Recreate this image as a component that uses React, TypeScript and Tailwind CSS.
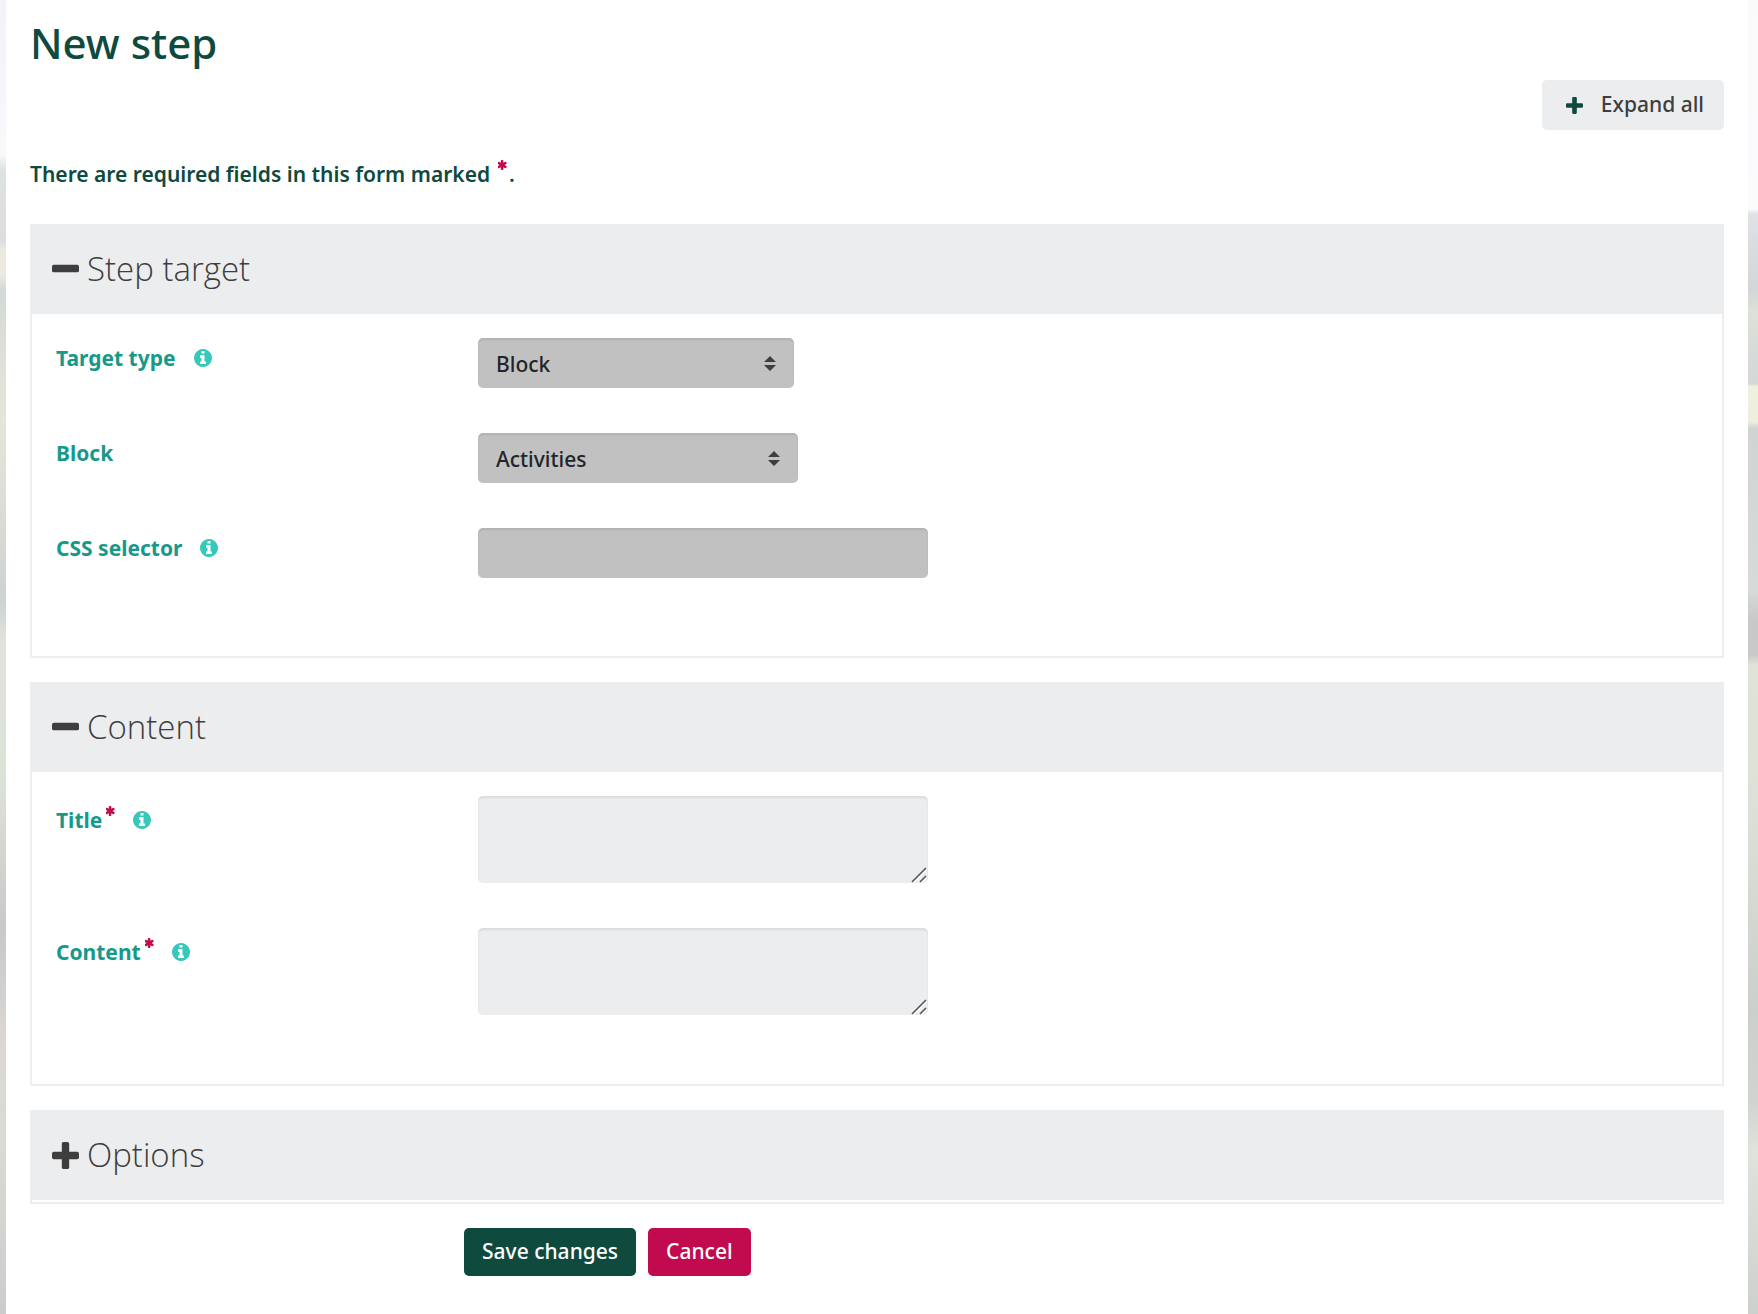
import { useState } from 'react'
import type { ReactNode } from 'react'
import clsx from 'clsx'

const leftScenery =
  'bg-[linear-gradient(to_bottom,#f2f3f9_0px,#f8f9fb_155px,#dfe2e2_170px,#dbdedc_240px,#eceadf_250px,#eceadf_275px,#d5d9d5_290px,#e3e7d9_420px,#d9dcd4_520px,#ced2d2_600px,#dfe3da_640px,#dde2d7_780px,#c8c9c9_930px,#dcd8d4_1050px,#d8dbd4_1150px,#cacdcb_1314px)]'
const rightScenery =
  'bg-[linear-gradient(to_bottom,#fafafb_0px,#fbfbfd_209px,#dfe2e6_214px,#d2d6d8_290px,#dde1d8_310px,#d3d7d7_384px,#eff0de_386px,#eeefdc_422px,#d0d4d3_428px,#d6dad9_590px,#c8c8c9_620px,#c9c9c8_655px,#e0e4d7_665px,#dce0d6_810px,#ccd0cc_1010px,#d0d3cf_1100px,#e0e3dc_1150px,#cdd1cd_1314px)]'

function PlusIcon({ className }: { className?: string }) {
  return (
    <svg viewBox="0 0 1408 1408" className={className} fill="currentColor" aria-hidden="true">
      <rect x="0" y="512" width="1408" height="384" rx="96" />
      <rect x="512" y="0" width="384" height="1408" rx="96" />
    </svg>
  )
}

function MinusIcon({ className }: { className?: string }) {
  return (
    <svg viewBox="0 0 1408 1408" className={className} fill="currentColor" aria-hidden="true">
      <rect x="0" y="450" width="1408" height="400" rx="96" />
    </svg>
  )
}

function InfoIcon() {
  return (
    <svg viewBox="128 128 1536 1536" className="size-[18px]" fill="currentColor" aria-hidden="true">
      <path d="M1152 1376v-160q0-14-9-23t-23-9h-96v-512q0-14-9-23t-23-9h-320q-14 0-23 9t-9 23v160q0 14 9 23t23 9h96v320h-96q-14 0-23 9t-9 23v160q0 14 9 23t23 9h448q14 0 23-9t9-23zm-128-896v-160q0-14-9-23t-23-9h-192q-14 0-23 9t-9 23v160q0 14 9 23t23 9h192q14 0 23-9t9-23zm640 416q0 209-103 385.5t-279.5 279.5-385.5 103-385.5-103-279.5-279.5-103-385.5 103-385.5 279.5-279.5 385.5-103 385.5 103 279.5 279.5 103 385.5z" />
    </svg>
  )
}

function Required({ className }: { className?: string }) {
  return (
    <svg
      viewBox="212 128 1368 1536"
      className={clsx('h-[10px] w-[9px] text-[#c20b4f]', className)}
      fill="currentColor"
      role="img"
      aria-label="Required"
    >
      <path d="M1482 1050q46 26 59.5 77.5t-12.5 97.5l-64 110q-26 46-77.5 59.5t-97.5-12.5l-266-153v307q0 52-38 90t-90 38h-128q-52 0-90-38t-38-90v-307l-266 153q-46 26-97.5 12.5t-77.5-59.5l-64-110q-26-46-12.5-97.5t59.5-77.5l266-154-266-154q-46-26-59.5-77.5t12.5-97.5l64-110q26-46 77.5-59.5t97.5 12.5l266 153v-307q0-52 38-90t90-38h128q52 0 90 38t38 90v307l266-153q46-26 97.5-12.5t77.5 59.5l64 110q26 46 12.5 97.5t-59.5 77.5l-266 154z" />
    </svg>
  )
}

interface SectionProps {
  title: string
  open: boolean
  onToggle: () => void
  children?: ReactNode
}

function Section({ title, open, onToggle, children }: SectionProps) {
  const Icon = open ? MinusIcon : PlusIcon
  return (
    <section className="mb-6 border-2 border-t-0 border-[#eeeeef]">
      <h2 className="-mx-0.5 bg-[#ecedef]">
        <button
          type="button"
          aria-expanded={open}
          onClick={onToggle}
          className="flex h-[90px] w-full items-center gap-2 px-[22px] text-left font-['Open_Sans',sans-serif] text-[33px] font-light text-[#3e3e3e]"
        >
          <Icon className="size-[27px]" />
          {title}
        </button>
      </h2>
      {open ? children : <div className="h-0.5" />}
    </section>
  )
}

interface FieldProps {
  id: string
  label: string
  required?: boolean
  help?: boolean
  children: ReactNode
}

function Field({ id, label, required, help, children }: FieldProps) {
  return (
    <div className="grid grid-cols-[422px_1fr] items-start">
      <div className={clsx('flex items-center gap-[18px] text-[#17998a]', required ? 'pt-2.5' : 'pt-1.5')}>
        <label htmlFor={id} className="flex text-[21px] leading-7 font-bold">
          {label}
          {required && <Required className="ml-1" />}
        </label>
        {help && (
          <button type="button" aria-label={`Help with ${label}`} className="text-[#36c9bb]">
            <InfoIcon />
          </button>
        )}
      </div>
      <div>{children}</div>
    </div>
  )
}

const control = 'rounded-[5px] shadow-[inset_0_2px_2px_rgba(0,0,0,0.08)] text-[21px] font-medium text-[#212529]'

function Select({ id, options, className }: { id: string; options: string[]; className: string }) {
  return (
    <div className={clsx('relative', className)}>
      <select id={id} className={clsx(control, 'h-[50px] w-full appearance-none bg-[#c1c1c1] pt-1 pr-10 pl-[18px]')}>
        {options.map(o => (
          <option key={o}>{o}</option>
        ))}
      </select>
      <svg
        viewBox="0 0 12 15"
        className="pointer-events-none absolute top-[18px] right-[18px] h-[15px] w-3"
        fill="#3e3e3e"
        aria-hidden="true"
      >
        <path d="M6 0L12 6H0zM0 9h12L6 15z" />
      </svg>
    </div>
  )
}

function TextArea({ id }: { id: string }) {
  return (
    <div className="relative w-[450px]">
      <textarea
        id={id}
        className={clsx(control, 'block h-[87px] w-full resize-none bg-[#ecedef] px-[18px] py-2')}
      />
      {/* resize grip */}
      <svg
        viewBox="0 0 16 16"
        className="pointer-events-none absolute right-px bottom-0 size-4"
        fill="none"
        aria-hidden="true"
      >
        <path d="M2 16L16 2M10 16l6-6" stroke="#fff" strokeWidth="1.5" />
        <path d="M1 15L15 1M9 15l6-6" stroke="#505050" strokeWidth="1.5" />
      </svg>
    </div>
  )
}

export default function App() {
  const [open, setOpen] = useState({ target: true, content: true, options: false })
  const toggle = (key: keyof typeof open) => setOpen(s => ({ ...s, [key]: !s[key] }))

  return (
    <div className="flex min-h-screen bg-white font-['Noto_Sans',sans-serif]">
      <div className={clsx('w-1.5 shrink-0', leftScenery)} />
      <main className="min-w-0 flex-1 px-6 pt-4">
        <h1 className="text-[42px] leading-[54px] font-medium text-[#0f4a3e]">New step</h1>

        <form onSubmit={e => e.preventDefault()}>
          <div className="mt-2.5 flex justify-end">
            <button
              type="button"
              onClick={() => setOpen({ target: true, content: true, options: true })}
              className="flex h-[50px] items-center gap-[18px] rounded-[5px] bg-[#ecedef] pr-5 pl-6 text-[21px] font-medium text-[#3e3e3e]"
            >
              <PlusIcon className="size-[17px] text-[#0f4a3e]" />
              Expand all
            </button>
          </div>

          <p className="mt-[30px] mb-9 flex text-[21px] leading-7 font-semibold text-[#0f4a3e]">
            There are required fields in this form marked
            <Required className="mr-0.5 ml-2" />.
          </p>

          <Section title="Step target" open={open.target} onToggle={() => toggle('target')}>
            <div className="flex flex-col gap-[45px] px-6 pt-6 pb-[78px]">
              <Field id="targettype" label="Target type" help>
                <Select id="targettype" options={['Block', 'CSS selector', 'Display in middle of page']} className="w-[316px]" />
              </Field>
              <Field id="block" label="Block">
                <Select id="block" options={['Activities', 'Calendar', 'Comments']} className="w-80" />
              </Field>
              <Field id="selector" label="CSS selector" help>
                <input id="selector" type="text" className={clsx(control, 'block h-[50px] w-[450px] bg-[#c1c1c1] px-[18px]')} />
              </Field>
            </div>
          </Section>

          <Section title="Content" open={open.content} onToggle={() => toggle('content')}>
            <div className="flex flex-col gap-[45px] px-6 pt-6 pb-[69px]">
              <Field id="title" label="Title" required help>
                <TextArea id="title" />
              </Field>
              <Field id="content" label="Content" required help>
                <TextArea id="content" />
              </Field>
            </div>
          </Section>

          <Section title="Options" open={open.options} onToggle={() => toggle('options')} />

          <div className="flex gap-3 pl-[434px] text-[21px] font-medium text-white">
            <button type="submit" className="h-12 rounded-[5px] bg-[#0f4a3e] px-[18px]">
              Save changes
            </button>
            <button type="button" className="h-12 rounded-[5px] bg-[#c20b4f] px-[18px]">
              Cancel
            </button>
          </div>
        </form>
      </main>
      <div className={clsx('w-2.5 shrink-0', rightScenery)} />
    </div>
  )
}
